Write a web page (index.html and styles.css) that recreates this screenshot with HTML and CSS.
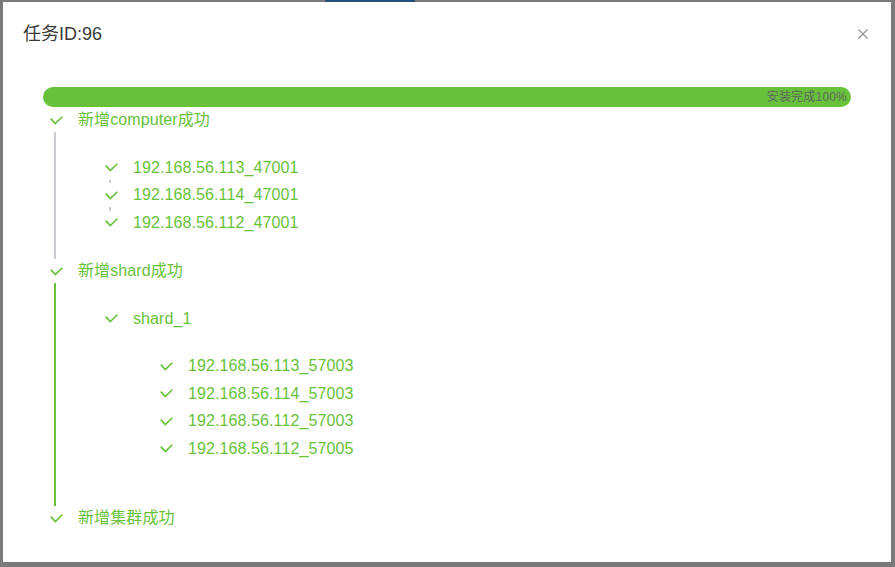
FILE: index.html
```html
<!DOCTYPE html>
<html lang="zh-CN">
<head>
<meta charset="utf-8">
<title>任务ID:96</title>
<link rel="stylesheet" href="styles.css">
</head>
<body>
<div class="backdrop-top"><span class="backdrop-tab"></span></div>
<div class="dialog">
  <div class="dialog-header">
    <span class="dialog-title">任务ID:96</span>
    <span class="dialog-close" aria-label="close">
      <svg width="10" height="10" viewBox="0 0 10 10"><path d="M0.5 0.5 L9.5 9.5 M9.5 0.5 L0.5 9.5" stroke="#909399" stroke-width="1.2" fill="none"/></svg>
    </span>
  </div>
  <div class="dialog-body">
    <div class="progress"><span class="progress-text">安装完成100%</span></div>
    <div class="tree">
      <div class="node">
        <div class="row"><svg class="check" viewBox="0 0 13 9"><path d="M0.8 2.6 L5.3 7.6 L12.3 0.8"/></svg><span class="label">新增computer成功</span></div>
        <div class="body line-gray">
          <div class="node">
            <div class="row"><svg class="check" viewBox="0 0 13 9"><path d="M0.8 2.6 L5.3 7.6 L12.3 0.8"/></svg><span class="label">192.168.56.113_47001</span></div>
            <div class="tail tail-gray"></div>
          </div>
          <div class="node">
            <div class="row"><svg class="check" viewBox="0 0 13 9"><path d="M0.8 2.6 L5.3 7.6 L12.3 0.8"/></svg><span class="label">192.168.56.114_47001</span></div>
            <div class="tail tail-gray"></div>
          </div>
          <div class="node">
            <div class="row"><svg class="check" viewBox="0 0 13 9"><path d="M0.8 2.6 L5.3 7.6 L12.3 0.8"/></svg><span class="label">192.168.56.112_47001</span></div>
            <div class="tail"></div>
          </div>
        </div>
      </div>
      <div class="node">
        <div class="row"><svg class="check" viewBox="0 0 13 9"><path d="M0.8 2.6 L5.3 7.6 L12.3 0.8"/></svg><span class="label">新增shard成功</span></div>
        <div class="body line-green">
          <div class="node">
            <div class="row"><svg class="check" viewBox="0 0 13 9"><path d="M0.8 2.6 L5.3 7.6 L12.3 0.8"/></svg><span class="label">shard_1</span></div>
            <div class="body">
              <div class="node">
                <div class="row"><svg class="check" viewBox="0 0 13 9"><path d="M0.8 2.6 L5.3 7.6 L12.3 0.8"/></svg><span class="label">192.168.56.113_57003</span></div>
                <div class="tail"></div>
              </div>
              <div class="node">
                <div class="row"><svg class="check" viewBox="0 0 13 9"><path d="M0.8 2.6 L5.3 7.6 L12.3 0.8"/></svg><span class="label">192.168.56.114_57003</span></div>
                <div class="tail"></div>
              </div>
              <div class="node">
                <div class="row"><svg class="check" viewBox="0 0 13 9"><path d="M0.8 2.6 L5.3 7.6 L12.3 0.8"/></svg><span class="label">192.168.56.112_57003</span></div>
                <div class="tail"></div>
              </div>
              <div class="node">
                <div class="row"><svg class="check" viewBox="0 0 13 9"><path d="M0.8 2.6 L5.3 7.6 L12.3 0.8"/></svg><span class="label">192.168.56.112_57005</span></div>
                <div class="tail"></div>
              </div>
            </div>
          </div>
        </div>
      </div>
      <div class="node">
        <div class="row"><svg class="check" viewBox="0 0 13 9"><path d="M0.8 2.6 L5.3 7.6 L12.3 0.8"/></svg><span class="label">新增集群成功</span></div>
      </div>
    </div>
  </div>
</div>
</body>
</html>
```

FILE: styles.css
```css
* { box-sizing: border-box; }

html, body {
  margin: 0;
  height: 567px;
  overflow: hidden;
}

body {
  background: #7a7a7a;
  padding: 0 4px 0 3px;
  display: flex;
  flex-direction: column;
  font-family: "Liberation Sans", "Noto Sans CJK SC", sans-serif;
}

.backdrop-top {
  height: 2px;
  display: flex;
}

.backdrop-tab {
  margin-left: 322px;
  width: 90px;
  height: 2px;
  background: #28507c;
}

.dialog {
  height: 560px;
  background: #fff;
  display: flex;
  flex-direction: column;
}

.dialog-header {
  display: flex;
  justify-content: space-between;
  align-items: center;
  padding: 20px 23px 0 20px;
}

.dialog-title {
  font-size: 18px;
  line-height: 24px;
  color: #3a3a3a;
}

.dialog-close {
  display: flex;
  width: 10px;
  height: 10px;
}

.dialog-body {
  padding: 41px 40px 0 40px;
}

.progress {
  height: 20px;
  border-radius: 10px;
  background: #67c23a;
  display: flex;
  justify-content: flex-end;
  align-items: center;
  padding-right: 4px;
  margin-bottom: 1px;
}

.progress-text {
  font-size: 12px;
  line-height: 20px;
  color: #5e6660;
  letter-spacing: 0.2px;
}

.row {
  display: flex;
  align-items: center;
  height: 24px;
  padding-left: 7px;
  gap: 15px;
}

.check {
  width: 13px;
  height: 9px;
  flex: none;
}

.check path {
  fill: none;
  stroke: #67c23a;
  stroke-width: 1.6;
}

.label {
  font-size: 16px;
  line-height: 24px;
  color: #67c23a;
  white-space: nowrap;
  letter-spacing: 0.1px;
}

.body {
  margin-left: 11px;
  border-left: 2px solid transparent;
  padding: 23.5px 0 21px 42px;
}

.line-gray { border-left-color: #c9ccd1; }
.line-green { border-left-color: #67c23a; }

.tail {
  height: 3.5px;
  margin-left: 11px;
  border-left: 2px solid transparent;
}

.tail-gray { border-left-color: #c9ccd1; }
```
